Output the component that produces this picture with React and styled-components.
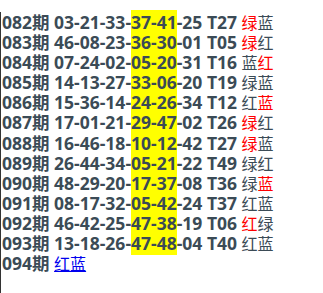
import React from "react";
import styled, { createGlobalStyle } from "styled-components";

const rows = [
  { no: "082", nums: ["03", "21", "33", "37", "41", "25"], t: "T27", tags: [["绿", true], ["蓝", false]] },
  { no: "083", nums: ["46", "08", "23", "36", "30", "01"], t: "T05", tags: [["绿", true], ["红", false]] },
  { no: "084", nums: ["07", "24", "02", "05", "20", "31"], t: "T16", tags: [["蓝", false], ["红", true]] },
  { no: "085", nums: ["14", "13", "27", "33", "06", "20"], t: "T19", tags: [["绿", false], ["蓝", false]] },
  { no: "086", nums: ["15", "36", "14", "24", "26", "34"], t: "T12", tags: [["红", false], ["蓝", true]] },
  { no: "087", nums: ["17", "01", "21", "29", "47", "02"], t: "T26", tags: [["绿", true], ["红", false]] },
  { no: "088", nums: ["16", "46", "18", "10", "12", "42"], t: "T27", tags: [["绿", true], ["蓝", false]] },
  { no: "089", nums: ["26", "44", "34", "05", "21", "22"], t: "T49", tags: [["绿", false], ["红", false]] },
  { no: "090", nums: ["48", "29", "20", "17", "37", "08"], t: "T36", tags: [["绿", false], ["蓝", true]] },
  { no: "091", nums: ["08", "17", "32", "05", "42", "24"], t: "T37", tags: [["红", false], ["蓝", false]] },
  { no: "092", nums: ["46", "42", "25", "47", "38", "19"], t: "T06", tags: [["红", true], ["绿", false]] },
  { no: "093", nums: ["13", "18", "26", "47", "48", "04"], t: "T40", tags: [["红", false], ["蓝", false]] },
];

const GlobalStyle = createGlobalStyle`
  html, body {
    margin: 0;
    padding: 0;
    background: #ffffff;
  }
`;

const SPage = styled.div`
  border-left: 1px solid #333;
  height: 281px;
  padding-left: 1px;
  margin-top: 12px;
  font-family: "Open Sans", "Noto Sans CJK SC", sans-serif;
  font-size: 17.5px;
  font-weight: 700;
  color: #3b4b56;
`;

const SRow = styled.div`
  line-height: 20.1px;
  height: 20.1px;
  white-space: nowrap;
`;

const SHighlight = styled.span`
  background: #ffff00;
`;

const STag = styled.span`
  font-weight: 400;
  font-size: 16px;
  color: ${(p) => (p.red ? "#ff0000" : "#3b4b56")};
`;

const SLink = styled.a`
  color: #0000ee;
  font-weight: 400;
  font-size: 16px;
  text-decoration: underline;
`;

export default function App() {
  return (
    <>
      <GlobalStyle />
      <SPage>
        {rows.map((row) => (
          <SRow key={row.no}>
            {row.no}期 {row.nums.slice(0, 3).join("-")}-
            <SHighlight>{row.nums.slice(3, 5).join("-")}</SHighlight>-{row.nums[5]} {row.t}{" "}
            {row.tags.map(([ch, red], i) => (
              <STag key={i} red={red}>{ch}</STag>
            ))}
          </SRow>
        ))}
        <SRow>
          094期 <SLink href="#">红蓝</SLink>
        </SRow>
      </SPage>
    </>
  );
}
